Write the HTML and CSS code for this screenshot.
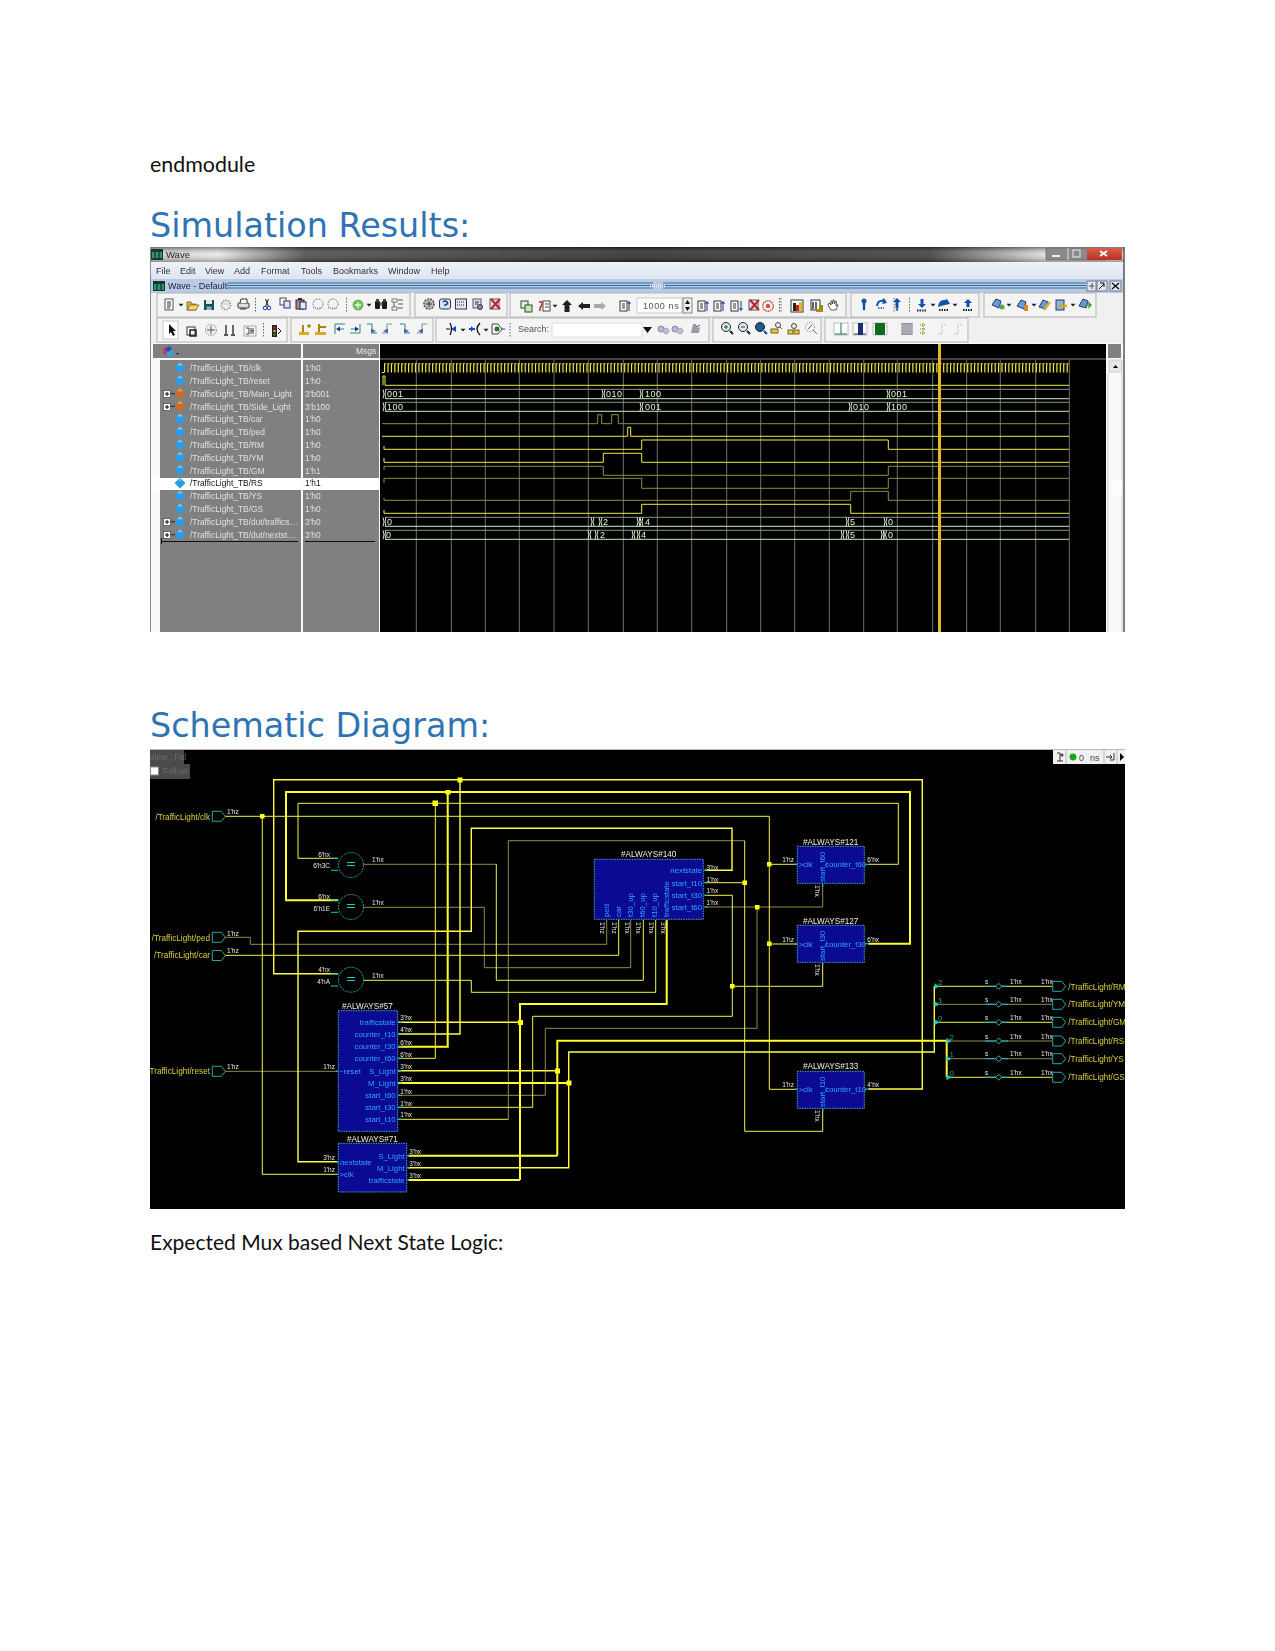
FILE: index.html
```html
<!DOCTYPE html>
<html lang="en">
<head>
<meta charset="utf-8">
<title>Simulation Results</title>
<link rel="stylesheet" href="styles.css">
</head>
<body>
<main class="page">
<p class="body-text first">endmodule</p>
<h2 class="heading">Simulation Results:</h2>

<svg class="shot wave" width="975" height="385" viewBox="150 247 975 385" xmlns="http://www.w3.org/2000/svg">
<defs>
<linearGradient id="titleH" x1="0" x2="1" y1="0" y2="0">
<stop offset="0" stop-color="#c8c8c8"/><stop offset=".07" stop-color="#e8e8e8"/><stop offset=".16" stop-color="#4a4a4a"/><stop offset=".5" stop-color="#2c2c2c"/><stop offset=".8" stop-color="#3c3c3c"/><stop offset=".92" stop-color="#e0e0e0"/><stop offset="1" stop-color="#d8d8d8"/>
</linearGradient>
<linearGradient id="titleV" x1="0" x2="0" y1="0" y2="1">
<stop offset="0" stop-color="#000" stop-opacity=".45"/><stop offset=".5" stop-color="#fff" stop-opacity=".1"/><stop offset="1" stop-color="#000" stop-opacity=".3"/>
</linearGradient>
<linearGradient id="menuV" x1="0" x2="0" y1="0" y2="1"><stop offset="0" stop-color="#eef1f8"/><stop offset="1" stop-color="#dfe5f1"/></linearGradient>
<linearGradient id="closeV" x1="0" x2="0" y1="0" y2="1"><stop offset="0" stop-color="#d8604c"/><stop offset="1" stop-color="#b83020"/></linearGradient>

<path id="tr" d="M-1 0q2 4.5 0 9M2 0q-2 4.5 0 9"/>
<g id="dia-b"><path d="M0-5.5 5.5 0 0 5.5-5.5 0Z" fill="#2a9ce8"/><path d="M0-5.5 3 -2.500H-3Z" fill="#6cc8f4"/></g>
<g id="dia-o"><path d="M0-5.5 5.5 0 0 5.5-5.5 0Z" fill="#d4682a"/><path d="M0-5.5 3-2.500H-3Z" fill="#ec9a58"/></g>
<g id="plus"><rect x="-3.5" y="-3.5" width="7" height="7" fill="#fff" stroke="#333" stroke-width=".6"/><path d="M-2 0H2M0-2V2" stroke="#000"/></g>

<path id="a" d="M-2.5-1.2H2.5L0 1.5Z" fill="#222"/>
<g id="i-doc"><rect x="-4" y="-6" width="8" height="11" fill="#fff" stroke="#555"/><path d="M-2-3H2M-2-1H2M-2 1H2M-2 3H1" stroke="#333" fill="none"/></g>
<g id="i-folder"><path d="M-6 5V-3H-2L-1-1H3V5Z" fill="#e0b040" stroke="#6a5010" stroke-width=".7"/><path d="M-6 5-3 0H6L3 5Z" fill="#f2d470" stroke="#6a5010" stroke-width=".7"/></g>
<g id="i-save"><rect x="-5" y="-5" width="10" height="10" fill="#12505a"/><rect x="-3" y="-5" width="6" height="4" fill="#dfe8e8"/><rect x="-2.500" y="1.500" width="5" height="3.500" fill="#9ab"/></g>
<g id="i-reload"><circle r="4.500" fill="none" stroke="#9aa88a" stroke-width="2" stroke-dasharray="1.500 1"/><path d="M-3-1H3" stroke="#b9c8a8"/></g>
<g id="i-print"><rect x="-5" y="-1" width="11" height="5" rx="1" fill="#ddd" stroke="#333"/><path d="M-3-1-2-5H4L4-1" fill="#fff" stroke="#333"/><path d="M-3 5H3" stroke="#333"/></g>
<g id="i-cut"><circle cx="-2" cy="4" r="1.800" fill="none" stroke="#2233aa"/><circle cx="2" cy="4" r="1.800" fill="none" stroke="#2233aa"/><path d="M-1.500 2.500 1.500-5M1.500 2.500-1.500-5" stroke="#222"/></g>
<g id="i-copy"><rect x="-5" y="-5" width="6" height="7" fill="#fff" stroke="#445"/><rect x="-1" y="-2" width="6" height="7" fill="#dfe6ff" stroke="#335"/></g>
<g id="i-paste"><rect x="-5" y="-4" width="8" height="9" fill="#a88" stroke="#422"/><rect x="-1" y="-2" width="6" height="7" fill="#e8ecff" stroke="#226"/><rect x="-3" y="-6" width="4" height="2" fill="#333"/></g>
<g id="i-dot"><circle r="5" fill="none" stroke="#556" stroke-dasharray="1.200 1.200"/><path d="M-5 4H5" stroke="#889" stroke-dasharray="1 1"/></g>
<g id="i-add"><circle r="5.500" fill="#74bb5a"/><path d="M-3 0H3M0-3V3" stroke="#e8ffe0" stroke-width="1.400"/></g>
<g id="i-bino"><rect x="-6" y="-3" width="5" height="8" rx="1" fill="#1a1a1a"/><rect x="1" y="-3" width="5" height="8" rx="1" fill="#1a1a1a"/><rect x="-5" y="-5" width="3" height="3" fill="#444"/><rect x="2" y="-5" width="3" height="3" fill="#444"/><rect x="-1.500" y="-1.500" width="3" height="3" fill="#666"/></g>
<g id="i-tree"><rect x="-5" y="-5" width="5" height="3" fill="#fff" stroke="#555" stroke-width=".8"/><rect x="-5" y="3" width="5" height="3" fill="#fff" stroke="#555" stroke-width=".8"/><path d="M1-4H6M1 0H6M1 4H6M-3-2V3" stroke="#555"/></g>
<g id="i-gear"><circle r="5" fill="#bbb" stroke="#556" stroke-dasharray="2 1" stroke-width="1.600"/><path d="M-3 0H3M0-3V3" stroke="#334"/></g>
<g id="i-help"><rect x="-5.500" y="-5" width="11" height="10" rx="2" fill="#d6e2f2" stroke="#334"/><path d="M-2-2Q0-4 2-2T0 1V2" fill="none" stroke="#1b3a8a" stroke-width="1.400"/></g>
<g id="i-cal"><rect x="-5.500" y="-5" width="11" height="10" fill="#e4e8ee" stroke="#334"/><path d="M-4-2H4M-4 1H4" stroke="#222" stroke-dasharray="1 1"/></g>
<g id="i-tool"><rect x="-5" y="-5" width="8" height="9" fill="#dde" stroke="#556"/><circle cx="2" cy="3" r="2.500" fill="#889" stroke="#334"/><path d="M-3-2H1M-3 0H0" stroke="#334"/></g>
<g id="i-redx"><rect x="-5" y="-5" width="9" height="10" fill="#dde" stroke="#556"/><path d="M-4-5 5 5M5-5-4 5" stroke="#c02020" stroke-width="2"/></g>
<g id="i-link"><rect x="-5" y="-5" width="7" height="7" fill="#e4f2e0" stroke="#205020"/><rect x="-1" y="-1" width="7" height="7" fill="#c8e4b8" stroke="#205020"/></g>
<g id="i-redlist"><rect x="-1" y="-5" width="7" height="10" fill="#fff" stroke="#444"/><path d="M1-2H5M1 1H5" stroke="#444"/><path d="M-5-4Q-1-5-2-2T-4 2V5" fill="none" stroke="#b02020" stroke-width="1.400"/></g>
<g id="i-up"><path d="M0-6 5-1H2.500V6H-2.500V-1H-5Z" fill="#222"/></g>
<g id="i-left"><path d="M-6 0-1-4V-2H6V2H-1V4Z" fill="#222"/></g>
<g id="i-right"><path d="M6 0 1-4V-2H-6V2H1V4Z" fill="#a8a8b0"/></g>
<g id="i-jump"><rect x="-5" y="-5" width="7" height="10" fill="#fff" stroke="#333"/><path d="M-3-2H0M-3 0H0M-3 2H0" stroke="#333"/><path d="M4 5V-4M2.500-2 4-4.500 5.500-2" stroke="#123a8a" fill="none"/></g>
<g id="i-down"><rect x="-6" y="-5" width="7" height="10" fill="#fff" stroke="#333"/><path d="M-4-2H-1M-4 0H-1M-4 2H-1" stroke="#333"/><path d="M4-5V4M2.500 2 4 4.500 5.500 2" stroke="#123a8a" fill="none"/></g>
<g id="i-tgt"><circle r="5.200" fill="none" stroke="#c04030" stroke-width="1.400" stroke-dasharray="1.500 .8"/><circle r="2.200" fill="#d05040"/></g>
<g id="i-bars"><rect x="-6" y="-6" width="12" height="12" fill="#fff" stroke="#333"/><rect x="-4" y="-3" width="3" height="8" fill="#222"/><rect x="-1" y="-1" width="3" height="6" fill="#cc2222"/><rect x="2" y="-4" width="3" height="9" fill="#d8c020"/></g>
<g id="i-bars2"><rect x="-6" y="-6" width="9" height="10" fill="#fff" stroke="#333"/><path d="M-4 3V-4M-1 3V-4" stroke="#222" stroke-width="1.400"/><rect x="2" y="-1" width="4" height="7" fill="#889020"/><rect x="-1" y="3" width="6" height="3" fill="#b81" /></g>
<g id="i-hand"><path d="M-4 2-5-1-3-2-2 0V-4L-1-4-.5-1 0-5 1-5 1.500-1 2.500-4 3.500-3.500 3 1 4-.5 5 0 3 5H-2Z" fill="#fff" stroke="#333" stroke-width=".8"/></g>
<g id="i-sd"><circle cy="-3" r="2.500" fill="#1150b0"/><path d="M0-1V4" stroke="#1150b0" stroke-width="2.500"/><circle cy="5" r="1.300" fill="#1150b0"/></g>
<g id="i-so"><path d="M-5 2Q-4-5 1-4L3-6 6-1 1 0 2-2Q-2-3-3 2Z" fill="#1150b0"/><path d="M-3 4H3" stroke="#1150b0" stroke-width="1.500" stroke-dasharray="1.500 1"/></g>
<g id="i-su"><path d="M0-6 4-2H1.500V4H-1.500V-2H-4Z" fill="#1150b0"/><circle cy="5.500" r="1.200" fill="#1150b0"/></g>
<g id="i-sd2"><path d="M-1.500-6H1.500V-1H4L0 3-4-1H-1.500Z" fill="#1150b0"/><path d="M-5 5.500H5" stroke="#223" stroke-width="2" stroke-dasharray="1.500 1"/></g>
<g id="i-so2"><path d="M-6 2Q-5-6 1-5L3-6 6-1 1 0-3 1Z" fill="#1150b0"/><path d="M-5 5H5" stroke="#223" stroke-width="2" stroke-dasharray="1.500 1"/></g>
<g id="i-su2"><path d="M0-6 4-2H1.500V2H-1.500V-2H-4Z" fill="#1150b0"/><path d="M-5 5H5" stroke="#223" stroke-width="2" stroke-dasharray="1.500 1"/></g>
<g id="i-blk1"><path d="M-6 1-2-5 3-3 1 4Z" fill="#5f9fd8" stroke="#336"/><circle cx="4" cy="3" r="2.500" fill="#56a850"/></g>
<g id="i-blk2"><path d="M-6 1-2-5 3-3 1 4Z" fill="#5f9fd8" stroke="#336"/><rect x="1" y="0" width="4" height="6" fill="#e08820"/></g>
<g id="i-blk3"><path d="M-6 2-2-5 3-3 1 4Z" fill="#5f9fd8" stroke="#336"/><path d="M-1 5 5-3" stroke="#e0b020" stroke-width="2.500"/></g>
<g id="i-blk4"><rect x="-5" y="-5" width="8" height="10" fill="#8fb4dc" stroke="#336"/><path d="M-2 1H6" stroke="#e0a820" stroke-width="2.500"/></g>
<g id="i-blk5"><path d="M-6 2-2-5 3-3 1 4Z" fill="#5f9fd8" stroke="#336"/><path d="M0 1H6M3-2 6 1 3 4" stroke="#4a9a40" fill="none" stroke-width="1.500"/></g>
<g id="i-ptr"><path d="M-3-6V4L-1 2 1 6 3 5 1 1H4Z" fill="#111"/></g>
<g id="i-zbox"><rect x="-5" y="-4" width="8" height="8" fill="#fff" stroke="#333"/><rect x="-2" y="-1" width="6" height="6" fill="none" stroke="#111" stroke-width="1.400"/></g>
<g id="i-move"><circle r="5.500" fill="#eee" stroke="#889" stroke-dasharray="1.500 1"/><path d="M-4 0H4M0-4V4" stroke="#556"/></g>
<g id="i-cur2"><path d="M-4-5V4M3-5V4M-6 5H-2M1 5H5" stroke="#222" stroke-width="1.300"/></g>
<g id="i-ruler"><rect x="-6" y="-5" width="12" height="10" fill="#f8f8f8" stroke="#889" stroke-width=".7"/><path d="M-4-3H-1V3H-4M1-3V3M3-3V3M1 0H4" stroke="#444" fill="none"/></g>
<g id="i-light"><rect x="-3" y="-6" width="5" height="12" fill="#222"/><circle cx="-.5" cy="-3.500" r="1.300" fill="#d02020"/><circle cx="-.5" cy="0" r="1.300" fill="#d8b020"/><circle cx="-.5" cy="3.500" r="1.300" fill="#209040"/><path d="M3-3 6 0 3 3" fill="none" stroke="#222"/></g>
<g id="i-c1"><path d="M-6 5H3M-2 5V-4" stroke="#a88410" stroke-width="2"/><rect x="-6" y="3" width="10" height="3" fill="#d8a820"/><path d="M4-5V-1M2-3H6" stroke="#a88410" stroke-width="1.300"/></g>
<g id="i-c2"><path d="M-2 5V-5M-2-2H5" stroke="#a88410" stroke-width="2"/><rect x="-6" y="3" width="11" height="3" fill="#d8a820"/></g>
<g id="i-e1"><path d="M-5 5V-5H5M-3 0H4" stroke="#1f8a78" fill="none"/><path d="M-4 0 0-2.500V2.500Z" fill="#2030b0"/></g>
<g id="i-e2"><path d="M5-5V4H-5M3 0H-4" stroke="#1f8a78" fill="none"/><path d="M4 0 0-2.500V2.500Z" fill="#2030b0"/></g>
<g id="i-e3"><path d="M-5-5H0V4H5" stroke="#1f8a78" fill="none"/><path d="M4 2-1-.5V4.500Z" fill="#5060c0"/></g>
<g id="i-e4"><path d="M5-5H0V4H-5" stroke="#7a9a88" fill="none"/><path d="M-4 2 1-.5V4.500Z" fill="#5060c0"/></g>
<g id="i-f1"><path d="M-5 0H-1M5 0H1" stroke="#111"/><path d="M-1-6Q2 0-1 6" fill="none" stroke="#111" stroke-width="1.300"/><path d="M0 0 5-3V3Z" fill="#2040d0"/></g>
<g id="i-f2"><path d="M-6 0H0" stroke="#2040d0" stroke-width="2"/><path d="M-1 0-4-3V3Z" fill="#2040d0"/><path d="M5-6Q-1 0 5 6" fill="none" stroke="#111" stroke-width="1.300"/></g>
<g id="i-f3"><path d="M-5-5H1L5 0 1 5H-5Z" fill="none" stroke="#444"/><circle r="2.500" fill="#1f7a30"/><path d="M5 0H8" stroke="#2040d0"/></g>
<g id="i-wave"><circle cx="-2" r="3" fill="#b8b8d8" stroke="#889"/><circle cx="3" cy="2" r="3" fill="#b8c0d8" stroke="#889" stroke-dasharray="1 1"/></g>
<g id="i-grey"><path d="M-4 4-2-5 1-5 2-1 5-2 4 4Z" fill="#9a9aa8"/><path d="M1-2 5-4" stroke="#555"/></g>
<g id="i-z"><circle cx="-1" cy="-1" r="4.500" fill="#d8e8f0" stroke="#222"/><path d="M3 3 6 6" stroke="#123" stroke-width="2"/><path d="M-3-1H1M-1-3V1" stroke="#206020"/></g>
<g id="i-zm"><circle cx="-1" cy="-1" r="4.500" fill="#d8e8f0" stroke="#222"/><path d="M3 3 6 6" stroke="#123" stroke-width="2"/><path d="M-3-1H1" stroke="#802020"/></g>
<g id="i-zf"><circle cx="-1" cy="-1" r="4.500" fill="#1a5a90" stroke="#123"/><path d="M3 3 6 6" stroke="#1a4a90" stroke-width="2.200"/></g>
<g id="i-zy"><rect x="-6" y="1" width="7" height="4" fill="#e8c840" stroke="#7a6010"/><circle cx="1" cy="-3" r="2.500" fill="#eee" stroke="#445"/><path d="M3-1 5 1" stroke="#445"/></g>
<g id="i-zd"><rect x="-6" y="1" width="5" height="4" fill="#e8c840" stroke="#7a6010"/><rect x="0" y="1" width="5" height="4" fill="#e8c840" stroke="#7a6010"/><circle cx="0" cy="-3" r="2.500" fill="#eee" stroke="#445"/></g>
<g id="i-zg"><circle cx="-1" cy="-1" r="4.500" fill="none" stroke="#889" stroke-dasharray="1.200 1"/><path d="M2 2 6 6" stroke="#667"/><path d="M-3 1 1-3" stroke="#a05050"/></g>
<g id="i-w1"><rect x="-7" y="-6" width="14" height="12" fill="#fff" stroke="#bbb"/><path d="M0-6V5M-6 5H6" stroke="#1a6a5a"/></g>
<g id="i-w2"><rect x="-7" y="-6" width="14" height="12" fill="#fff" stroke="#bbb"/><rect x="-2" y="-6" width="5" height="12" fill="#1a2f7a"/><path d="M-6 5H6" stroke="#1a2f7a"/></g>
<g id="i-w3"><rect x="-7" y="-6" width="14" height="12" fill="#fff" stroke="#bbb"/><rect x="-5" y="-6" width="10" height="12" fill="#106a20"/></g>
<g id="i-w4"><rect x="-5.500" y="-6" width="11" height="12" fill="#6a6a78"/><path d="M-5.500-4H5.500M-5.500-2H5.500M-5.500 0H5.500M-5.500 2H5.500M-5.500 4H5.500M-4-6V6M-2-6V6M0-6V6M2-6V6M4-6V6" stroke="#e8e8ee" stroke-width=".6"/></g>
<g id="i-w5"><path d="M0-6V6" stroke="#c8b020" stroke-width="1.800" stroke-dasharray="1.500 1"/><path d="M-3-4H3M-3 0H3M-3 4H3" stroke="#339060" stroke-dasharray="1 1"/></g>
<g id="i-w6"><path d="M-4 5H0V-4H4" stroke="#b8c0a8" fill="none" stroke-dasharray="1.500 1"/></g>
</defs>

<!-- window -->
<rect class="win" x="150" y="247" width="975" height="385"/>
<rect x="150" y="247" width="974" height="15" fill="url(#titleH)"/>
<rect x="150" y="247" width="974" height="15" fill="url(#titleV)"/>
<rect x="151" y="249" width="12" height="11" fill="#183830"/><rect x="152" y="252" width="10" height="6" fill="#2a9a70"/><path d="M155 252V258M159 252V258" stroke="#111"/>
<text class="t-title" x="166" y="258">Wave</text>
<rect x="1046" y="248" width="60" height="12" rx="1" fill="#8a8a8a" stroke="#555" stroke-width=".6"/>
<rect x="1087" y="248" width="35" height="12" rx="1" fill="url(#closeV)"/>
<path d="M1068 248V260" stroke="#ddd"/>
<rect x="1052" y="255" width="8" height="2" fill="#eee"/>
<rect x="1073" y="250" width="7" height="7" fill="none" stroke="#eee"/>
<path d="M1100 251 1107 256M1107 251 1100 256" stroke="#fff" stroke-width="1.800"/>

<rect x="150" y="262" width="974" height="17" fill="url(#menuV)"/>
<g class="t-menu">
<text x="156" y="274">File</text><text x="180" y="274">Edit</text><text x="205" y="274">View</text><text x="234" y="274">Add</text><text x="261" y="274">Format</text><text x="301" y="274">Tools</text><text x="333" y="274">Bookmarks</text><text x="388" y="274">Window</text><text x="431" y="274">Help</text>
</g>

<rect x="151" y="279" width="972" height="14" fill="#b9cbe4"/>
<rect x="153" y="281" width="12" height="10" fill="#163630"/><rect x="154" y="284" width="10" height="6" fill="#249a70"/><path d="M157 284V290M161 284V290" stroke="#111"/>
<text class="t-sub" x="168" y="289">Wave - Default</text>
<path d="M227 283H1086M227 285.500H1086M227 288H1086" stroke="#2f6f9f"/>
<rect x="653" y="282" width="10" height="8" fill="#b9cbe4"/><path d="M650 286H665" stroke="#d9e4f2" stroke-width="3" stroke-dasharray="1 1"/>
<rect x="1087" y="281" width="9" height="10" fill="#dfe6f0" stroke="#778"/><path d="M1089 286H1094M1092 283V289" stroke="#333" stroke-width=".8"/>
<rect x="1097" y="281" width="10" height="10" fill="#dfe6f0" stroke="#778"/><path d="M1099 289 1104 284M1100 283H1104V287" stroke="#111" fill="none"/>
<rect x="1110" y="281" width="11" height="10" fill="#dfe6f0" stroke="#778"/><path d="M1112 283 1119 289M1119 283 1112 289" stroke="#111" stroke-width="1.500"/>

<!-- toolbars -->
<rect x="151" y="293" width="972" height="50" fill="#f0f0f0"/>
<g class="tbgroup">
<rect x="157" y="293" width="253" height="24"/><rect x="415" y="293" width="92" height="24"/><rect x="510" y="293" width="336" height="24"/><rect x="851" y="293" width="128" height="24"/><rect x="984" y="293" width="112" height="24"/>
<rect x="157" y="318" width="130" height="24"/><rect x="291" y="318" width="142" height="24"/><rect x="436" y="318" width="273" height="24"/><rect x="713" y="318" width="108" height="24"/><rect x="825" y="318" width="143" height="24"/>
</g>
<g class="tbsep"><path d="M255.500 298V312M346.500 298V312M779.500 298V312M909.500 298V312M263.500 323V337M510 323V337M781 298V312M894 298V312"/></g>
<g>
<use href="#i-doc" x="169" y="305"/><use href="#a" x="181" y="305"/><use href="#i-folder" x="193" y="305"/><use href="#i-save" x="209" y="305"/><use href="#i-reload" x="226" y="305"/><use href="#i-print" x="243" y="304"/>
<use href="#i-cut" x="267" y="304"/><use href="#i-copy" x="285" y="303"/><use href="#i-paste" x="301" y="304"/><use href="#i-dot" x="318" y="304"/><use href="#i-dot" x="333" y="304"/>
<use href="#i-add" x="358" y="305"/><use href="#a" x="369" y="305"/><use href="#i-bino" x="381" y="304"/><use href="#i-tree" x="397" y="304"/>
<use href="#i-gear" x="429" y="304"/><use href="#i-help" x="445" y="304"/><use href="#i-cal" x="461" y="304"/><use href="#i-tool" x="478" y="304"/><use href="#i-redx" x="495" y="304"/>
<use href="#i-link" x="526" y="306"/><use href="#i-redlist" x="544" y="306"/><use href="#a" x="555" y="306"/><use href="#i-up" x="567" y="306"/><use href="#i-left" x="584" y="306"/><use href="#i-right" x="600" y="306"/><use href="#i-jump" x="625" y="306"/>
<rect x="637" y="298" width="45" height="15" fill="#fff" stroke="#c8c8c8"/><text class="t-mono" x="643" y="309">1000 ns</text>
<rect x="683" y="298" width="9" height="15" fill="#eee" stroke="#888"/><path d="M687.500 300 685 304H690ZM687.500 311 685 307H690Z" fill="#111"/>
<use href="#i-jump" x="703" y="306"/><use href="#i-jump" x="719" y="306"/><use href="#i-down" x="737" y="306"/><use href="#i-redx" x="754" y="305"/><use href="#i-tgt" x="768" y="306"/>
<use href="#i-bars" x="797" y="306"/><use href="#i-bars2" x="817" y="306"/><use href="#i-hand" x="833" y="305"/>
<use href="#i-sd" x="864" y="304"/><use href="#i-so" x="881" y="304"/><use href="#i-su" x="897" y="304"/><use href="#i-sd2" x="922" y="305"/><use href="#a" x="933" y="305"/><use href="#i-so2" x="944" y="305"/><use href="#a" x="955" y="305"/><use href="#i-su2" x="968" y="305"/>
<use href="#i-blk1" x="998" y="304"/><use href="#a" x="1009" y="305"/><use href="#i-blk2" x="1023" y="305"/><use href="#a" x="1034" y="305"/><use href="#i-blk3" x="1045" y="305"/><use href="#i-blk4" x="1061" y="305"/><use href="#a" x="1073" y="305"/><use href="#i-blk5" x="1085" y="304"/>

<rect x="163" y="321" width="15" height="18" fill="#fff" stroke="#c8c8c8"/>
<use href="#i-ptr" x="172" y="330"/><use href="#i-zbox" x="192" y="331"/><use href="#i-move" x="211" y="330"/><use href="#i-cur2" x="230" y="330"/><use href="#i-ruler" x="250" y="331"/>
<use href="#i-light" x="275" y="331"/>
<use href="#i-c1" x="305" y="329"/><use href="#i-c2" x="321" y="329"/><use href="#i-e1" x="340" y="329"/><use href="#i-e2" x="355" y="329"/><use href="#i-e3" x="372" y="329"/><use href="#i-e4" x="387" y="329"/><use href="#i-e3" x="405" y="329"/><use href="#i-e4" x="422" y="329"/>
<use href="#i-f1" x="451" y="329"/><use href="#a" x="463" y="330"/><use href="#i-f2" x="475" y="329"/><use href="#a" x="486" y="330"/><use href="#i-f3" x="497" y="329"/>
<text class="t-search" x="518" y="332">Search:</text>
<rect x="552" y="323" width="90" height="14" fill="#fff" stroke="#ddd"/>
<path d="M643 327H652L647.500 333Z" fill="#111"/>
<use href="#i-wave" x="663" y="329"/><use href="#i-wave" x="677" y="329"/><use href="#i-grey" x="695" y="329"/>
<use href="#i-z" x="727" y="328"/><use href="#i-zm" x="744" y="328"/><use href="#i-zf" x="761" y="328"/><use href="#i-zy" x="777" y="328"/><use href="#i-zd" x="794" y="329"/><use href="#i-zg" x="811" y="328"/>
<use href="#i-w1" x="841" y="329"/><use href="#i-w2" x="860" y="329"/><use href="#i-w3" x="880" y="329"/><use href="#i-w4" x="907" y="329"/><use href="#i-w5" x="923" y="329"/><use href="#i-w6" x="942" y="329"/><use href="#i-w6" x="958" y="329"/>
</g>

<!-- panes -->
<rect x="151" y="343" width="973" height="289" fill="#fafafa"/>
<path d="M150.500 247V632" stroke="#8a8a8a"/><path d="M1124 247V632" stroke="#333" stroke-width="1.200"/>
<rect x="153" y="344" width="148" height="14" fill="#808080"/>
<rect x="303" y="344" width="76" height="14" fill="#808080"/>
<rect x="160" y="360" width="141" height="272" fill="#808080"/>
<rect x="303" y="360" width="76" height="272" fill="#808080"/>
<rect x="380" y="344" width="726" height="288" fill="#000"/>
<rect x="1108" y="344" width="13" height="14" fill="#808080"/>
<rect x="1109" y="360" width="13" height="12" fill="#e8e8e8" stroke="#bbb" stroke-width=".7"/><path d="M1115.500 365 1113 368H1118Z" fill="#000"/>
<path d="M1108 373V632M1122 373V632" stroke="#c8c8c8"/>
<rect x="1113" y="480" width="9" height="15" fill="#fff"/>
<path d="M380 359H1106" stroke="#8a8a8a"/>
<circle cx="167" cy="351" r="4" fill="#d03070"/><circle cx="170" cy="353" r="3.500" fill="#2aa8d8"/><path d="M165 349 170 346 172 349 168 352Z" fill="#2050c0"/><path d="M176 353H179L177.500 355Z" fill="#222"/>
<text class="t-msg" x="356" y="354">Msgs</text>

<!-- rows -->
<rect x="153" y="478" width="148" height="12" fill="#fff"/><rect x="303" y="478" width="76" height="12" fill="#fff"/>
<g>
<use href="#dia-b" x="180" y="368"/><use href="#dia-b" x="180" y="380.700"/><use href="#dia-o" x="180" y="393.700"/><use href="#dia-o" x="180" y="406.300"/><use href="#dia-b" x="180" y="419"/><use href="#dia-b" x="180" y="432"/><use href="#dia-b" x="180" y="444.700"/><use href="#dia-b" x="180" y="457.300"/><use href="#dia-b" x="180" y="470.300"/><use href="#dia-b" x="180" y="483"/><use href="#dia-b" x="180" y="496"/><use href="#dia-b" x="180" y="509"/><use href="#dia-b" x="180" y="521.700"/><use href="#dia-b" x="180" y="534.700"/>
<path d="M170 393.700H175M170 406.300H175M170 521.700H175M170 534.700H175" stroke="#222"/>
<use href="#plus" x="167" y="394"/><use href="#plus" x="167" y="407"/><use href="#plus" x="167" y="522"/><use href="#plus" x="167" y="535"/>
</g>
<g class="t-name">
<text x="190" y="371">/TrafficLight_TB/clk</text>
<text x="190" y="384">/TrafficLight_TB/reset</text>
<text x="190" y="397">/TrafficLight_TB/Main_Light</text>
<text x="190" y="409.500">/TrafficLight_TB/Side_Light</text>
<text x="190" y="422">/TrafficLight_TB/car</text>
<text x="190" y="435">/TrafficLight_TB/ped</text>
<text x="190" y="448">/TrafficLight_TB/RM</text>
<text x="190" y="460.500">/TrafficLight_TB/YM</text>
<text x="190" y="473.500">/TrafficLight_TB/GM</text>
<text class="t-sel" x="190" y="486">/TrafficLight_TB/RS</text>
<text x="190" y="499">/TrafficLight_TB/YS</text>
<text x="190" y="512">/TrafficLight_TB/GS</text>
<text x="190" y="525">/TrafficLight_TB/dut/traffics…</text>
<text x="190" y="538">/TrafficLight_TB/dut/nextst…</text>
<text x="305" y="371">1'h0</text>
<text x="305" y="384">1'h0</text>
<text x="305" y="397">3'b001</text>
<text x="305" y="409.500">3'b100</text>
<text x="305" y="422">1'h0</text>
<text x="305" y="435">1'h0</text>
<text x="305" y="448">1'h0</text>
<text x="305" y="460.500">1'h0</text>
<text x="305" y="473.500">1'h1</text>
<text class="t-sel" x="305" y="486">1'h1</text>
<text x="305" y="499">1'h0</text>
<text x="305" y="512">1'h0</text>
<text x="305" y="525">3'h0</text>
<text x="305" y="538">3'h0</text>
</g>
<path d="M162 541.500H298M305 541.500H375" stroke="#111"/><path d="M161.500 538V544" stroke="#111"/>

<!-- waveforms -->
<path class="grid" d="M416.300 360V632M451.300 360V632M485.300 360V632M519.300 360V632M554 360V632M588.300 360V632M623.300 360V632M657.300 360V632M691.700 360V632M726.700 360V632M760.700 360V632M794.700 360V632M829.300 360V632M863.700 360V632M897.300 360V632M932.700 360V632M966.700 360V632M1000.300 360V632M1035.700 360V632M1069.300 360V632"/>
<path class="clk-v" d="M384 368H1069"/>
<path class="clk-t" d="M384 363.800H1069"/>
<path class="sig" d="M382 372.500H384"/>
<path class="sig" d="M383 385.300V376H385V385.300H1069"/>
<g class="bus-dim">
<path d="M385 389.300H1069M385 402.300H1069M385 517.300H1069M385 530.300H1069"/>
</g>
<g class="bus-bright">
<path d="M385 398.700H1069M385 411.300H1069M385 526.300H1069M385 539.300H1069"/>
</g>
<g class="bus-tr">
<use href="#tr" x="384" y="389.500"/><use href="#tr" x="603" y="389.500"/><use href="#tr" x="641" y="389.500"/><use href="#tr" x="888" y="389.500"/>
<use href="#tr" x="384" y="402.300"/><use href="#tr" x="641" y="402.300"/><use href="#tr" x="850" y="402.300"/><use href="#tr" x="888" y="402.300"/>
<use href="#tr" x="384" y="517.300"/><use href="#tr" x="592" y="517.300"/><use href="#tr" x="600" y="517.300"/><use href="#tr" x="638" y="517.300"/><use href="#tr" x="641" y="517.300"/><use href="#tr" x="847" y="517.300"/><use href="#tr" x="885" y="517.300"/>
<use href="#tr" x="384" y="530.300"/><use href="#tr" x="589" y="530.300"/><use href="#tr" x="596" y="530.300"/><use href="#tr" x="633" y="530.300"/><use href="#tr" x="638" y="530.300"/><use href="#tr" x="842" y="530.300"/><use href="#tr" x="847" y="530.300"/><use href="#tr" x="882" y="530.300"/><use href="#tr" x="884.500" y="530.300"/>
</g>
<g class="t-val">
<text x="387" y="397">001</text><text x="606" y="397">010</text><text x="645" y="397">100</text><text x="891" y="397">001</text>
<text x="387" y="410">100</text><text x="645" y="410">001</text><text x="853" y="410">010</text><text x="891" y="410">100</text>
<text x="387" y="525">0</text><text x="603" y="525">2</text><text x="645" y="525">4</text><text x="850" y="525">5</text><text x="888" y="525">0</text>
<text x="386" y="538">0</text><text x="600" y="538">2</text><text x="641" y="538">4</text><text x="850" y="538">5</text><text x="888" y="538">0</text>
</g>
<path class="dim" d="M382 423.700H597.700V414.700H601.700V423.700H611.700V414.700H618.300V423.700H1069"/>
<path class="sig" d="M382 436.300H627.700V427.300H630.700V436.300H1069"/>
<path class="sig" d="M384 446V449.300H641.700V440H888.300V449.300H1069"/>
<path class="sig" d="M384 458V462.300H603.300V453.300H641.700V458M641.700 458V462.300H1069"/>
<path class="dim" d="M384 470V466.300H603.300V475.300H888.300V466.300H1069"/>
<path class="dim" d="M384 483V478.300H641.700V488.300H888.300V478.300H1069"/>
<path class="dim" d="M384 498V500.300H850.700V491.300H888.300V500.300H1069"/>
<path class="sig" d="M384 510V513.300H641.700V504.300H850.700V513.300H1069"/>
<rect class="cursor" x="938" y="344" width="3" height="288"/>
</svg>

<h2 class="heading second">Schematic Diagram:</h2>

<svg class="shot schem" width="975" height="460" viewBox="150 749 975 460" xmlns="http://www.w3.org/2000/svg">
<defs>
<path id="port-in" d="M0-5H9L13 0 9 5H0Z"/>
<path id="inv" d="M-3 0 0-3 3 0 0 3Z"/>
<path id="eq" d="M-4-1.500H4M-4 1.500H4"/>
<path id="tri" d="M0-3 5 0 0 3Z"/>
</defs>
<rect class="sbg" x="150" y="749" width="975" height="460"/>
<path d="M150 749.500H1125" stroke="#b8b8b8"/>

<rect x="150" y="750" width="34" height="14" fill="#4a4a4a"/>
<rect x="150" y="764" width="40" height="15" fill="#4a4a4a"/>
<text class="t-ghost" x="149" y="760">View : Fal</text>
<rect x="150.500" y="767" width="8" height="8" fill="#fff" stroke="#888"/>
<text class="t-ghost" x="163" y="774">Follow</text>

<rect x="1053" y="750" width="72" height="14" fill="#f0f0f0"/>
<path d="M1066 750V764M1104 750V764M1117 750V764" stroke="#bbb"/>
<path d="M1057 753H1060V761M1057 761H1063" stroke="#333" fill="none"/><circle cx="1062" cy="755" r="1.500" fill="#444"/>
<circle cx="1073" cy="757" r="3.400" fill="#17a617"/>
<text class="t-nsbar" x="1079" y="761">0</text><text class="t-nsbar" x="1090" y="761">ns</text>
<path d="M1106 757H1112M1110 755 1112 757 1110 759M1114 753V760H1110" stroke="#333" fill="none"/>
<path d="M1120 753 1124 757 1120 761Z" fill="#000"/>

<!-- wires -->
<g class="w-dim">
<path d="M225 937.300H250.300V944.300H606.700V920"/>
<path d="M363.300 907.300H484.300V967.700H630.700V920"/>
<path d="M225 1071.300H338"/>
<path d="M705 907H822.700V883.300"/>
<path d="M757 907V1028.300H545.300V1095.300H398"/>
<path d="M508.300 1119.300V840.700H744.700"/>
<path d="M363.300 864.300H496.300"/>
</g>
<g class="w">
<path d="M225 816.300H769.300V1089.300H797.300"/>
<path d="M769.300 864.300H797.300M769.300 944H797.300"/>
<path d="M262.300 816.300V1174.300H338.300"/>
<path d="M435.300 803.300V1058.300H398.300"/>
<path d="M298 858.300V803.300H898.300V864.300H868.300"/>
<path d="M298 858.300H338"/>
<path d="M225 955.300H618.700V920"/>
<path d="M496.300 864.300V980.300H643.300V920"/>
<path d="M363.300 980.300H471.300V992.300H655.700V920"/>
<path d="M705 895.300H732.300V1016.300H532.700V1107.300H398"/>
<path d="M732.300 986.300H822.700V962.300"/>
<path d="M744.700 840.700V1131.300H822.700V1108.300"/>
<path d="M705 882.700H744.700"/>
<path d="M398 1119.300H508.300"/>
</g>
<g class="w-mid">
<path d="M338.300 973.700H273.700V779.700H922.300V1089H868.300"/>
<path d="M460 779.700V1034H398.300"/>
<path d="M705 870.300H732V828.300H471.300V931.300H298V1161.700H338"/>
<path d="M398 1022.300H520"/>
<path d="M408 1167.700H568.700V1052H934.300V986"/>
<path d="M398 1070.700H557.300"/>
</g>
<g class="w-thick">
<path d="M338.300 900.300H286V792H910V943.700H868.300"/>
<path d="M447.700 792V1046.700H398.300"/>
<path d="M520 1180H408.300M520 1180V1004H666.700V920"/>
<path d="M557.300 1155.700H408.300M557.300 1155.700V1040.700H946.700"/>
<path d="M398 1083H568.700"/>
<path d="M946.700 1041V1077.300"/>
</g>
<g class="junc">
<rect x="260" y="814" width="4.500" height="4.500"/><rect x="457.500" y="777.500" width="5" height="5"/><rect x="445.500" y="790" width="5" height="4.500"/><rect x="432.500" y="800.500" width="5.500" height="5.500"/>
<rect x="767" y="862" width="4.500" height="4.500"/><rect x="767" y="941.500" width="4.500" height="4.500"/><rect x="742.500" y="880.500" width="4.500" height="4.500"/><rect x="755" y="905" width="4.500" height="4.500"/><rect x="730" y="984" width="4.500" height="4.500"/>
<rect x="518" y="1020" width="5" height="5"/><rect x="555" y="1068.500" width="5" height="5"/><rect x="566.500" y="1080.500" width="5" height="5"/>
</g>

<!-- blocks -->
<g class="blk">
<rect x="594.300" y="859.300" width="109" height="60"/>
<rect x="797.300" y="846.300" width="67" height="37"/>
<rect x="797.300" y="925.300" width="67" height="37"/>
<rect x="797.300" y="1071.300" width="67" height="37"/>
<rect x="338.300" y="1010.700" width="59.400" height="120.600"/>
<rect x="338.300" y="1143.300" width="68.400" height="48.700"/>
</g>
<g class="stub">
<path d="M704 870.300H708M704 882.700H708M704 895.300H708M704 907H708M865 864.300H869M865 943.700H869M865 1089H869M794 864.300H797M794 944H797M794 1089.300H797M398 1022.300H402M398 1034H402M398 1046.700H402M398 1058.300H402M398 1070.700H402M398 1083H402M398 1095.300H402M398 1107.300H402M398 1119.300H402M407 1155.700H410M407 1167.700H410M407 1180H410M336 1161.700H338M336 1174.300H338M336 1071.300H338M822.700 884V887M822.700 963V966M822.700 1108.500V1112"/>
</g>

<g class="t-white">
<text x="621" y="857">#ALWAYS#140</text>
<text x="803" y="844.500">#ALWAYS#121</text>
<text x="803" y="924">#ALWAYS#127</text>
<text x="803" y="1069">#ALWAYS#133</text>
<text x="342" y="1008.500">#ALWAYS#57</text>
<text x="347" y="1142">#ALWAYS#71</text>
</g>

<g class="t-port">
<text class="end" x="702" y="873">nextstate</text><text class="end" x="702" y="885.500">start_t10</text><text class="end" x="702" y="898">start_t30</text><text class="end" x="702" y="910">start_t60</text>
<text transform="translate(608.500 917) rotate(-90)">ped</text><text transform="translate(620.500 917) rotate(-90)">car</text><text transform="translate(632.500 917) rotate(-90)">t30_up</text><text transform="translate(645 917) rotate(-90)">t60_up</text><text transform="translate(657 917) rotate(-90)">t10_up</text><text transform="translate(669 917) rotate(-90)">trafficstate</text>
<text x="798.500" y="867">&gt;clk</text><text x="825" y="867">counter_t60</text><text transform="translate(824.500 882) rotate(-90)">start_t60</text>
<text x="798.500" y="946.500">&gt;clk</text><text x="825" y="946.500">counter_t30</text><text transform="translate(824.500 961) rotate(-90)">start_t30</text>
<text x="798.500" y="1092">&gt;clk</text><text x="825" y="1092">counter_t10</text><text transform="translate(824.500 1107) rotate(-90)">start_t10</text>
<text class="end" x="395.700" y="1025">trafficstate</text><text class="end" x="395.700" y="1037">counter_t10</text><text class="end" x="395.700" y="1049">counter_t30</text><text class="end" x="395.700" y="1061">counter_t60</text><text class="end" x="395.700" y="1073.500">S_Light</text><text class="end" x="395.700" y="1086">M_Light</text><text class="end" x="395.700" y="1098">start_t60</text><text class="end" x="395.700" y="1110">start_t30</text><text class="end" x="395.700" y="1122">start_t10</text>
<text x="339" y="1073.500">~reset</text>
<text class="end" x="404.700" y="1158.500">S_Light</text><text class="end" x="404.700" y="1170.500">M_Light</text><text class="end" x="404.700" y="1183">trafficstate</text>
<text x="340" y="1164.500">nextstate</text><text x="339.500" y="1176.500">&gt;clk</text>
</g>

<g class="t-small">
<text x="227" y="813.500">1'hz</text><text x="227" y="935.500">1'hz</text><text x="227" y="953">1'hz</text><text x="227" y="1069">1'hz</text>
<text class="end" x="330" y="857">6'hx</text><text class="end" x="330" y="868">6'h3C</text><text x="372" y="862">1'hx</text>
<text class="end" x="330" y="899">6'hx</text><text class="end" x="330" y="910.500">6'h1E</text><text x="372" y="904.500">1'hx</text>
<text class="end" x="330" y="972">4'hx</text><text class="end" x="330" y="983.500">4'hA</text><text x="372" y="977.500">1'hx</text>
<text x="706.500" y="869.500">3'hx</text><text x="706.500" y="881.500">1'hx</text><text x="706.500" y="893">1'hx</text><text x="706.500" y="905">1'hx</text>
<text transform="translate(600 922) rotate(90)">1'hz</text><text transform="translate(612 922) rotate(90)">1'hz</text><text transform="translate(624.500 922) rotate(90)">1'hx</text><text transform="translate(636 922) rotate(90)">1'hx</text><text transform="translate(648.500 922) rotate(90)">1'hx</text><text transform="translate(660.500 922) rotate(90)">3'hx</text>
<text class="end" x="794" y="862">1'hz</text><text x="867.300" y="862">6'hx</text><text transform="translate(815 885) rotate(90)">1'hx</text>
<text class="end" x="794" y="941.500">1'hz</text><text x="867.300" y="941.500">6'hx</text><text transform="translate(815 964) rotate(90)">1'hx</text>
<text class="end" x="794" y="1086.500">1'hz</text><text x="867.300" y="1086.500">4'hx</text><text transform="translate(815 1110) rotate(90)">1'hx</text>
<text x="400.300" y="1020">3'hx</text><text x="400.300" y="1032">4'hx</text><text x="400.300" y="1044.500">6'hx</text><text x="400.300" y="1057">6'hx</text><text x="400.300" y="1069">3'hx</text><text x="400.300" y="1081">3'hx</text><text x="400.300" y="1093.500">1'hx</text><text x="400.300" y="1105.500">1'hx</text><text x="400.300" y="1117">1'hx</text>
<text class="end" x="335" y="1068.500">1'hz</text>
<text x="409.300" y="1154">3'hx</text><text x="409.300" y="1165.500">3'hx</text><text x="409.300" y="1178">3'hx</text>
<text class="end" x="335" y="1160">3'hz</text><text class="end" x="335" y="1171.500">1'hz</text>
</g>

<!-- comparators -->
<g class="cmp">
<circle cx="351" cy="865" r="12.500"/><circle cx="351" cy="907" r="12.500"/><circle cx="351" cy="979.700" r="12.500"/>
</g>
<g class="eqs">
<use href="#eq" x="351" y="864"/><use href="#eq" x="351" y="906"/><use href="#eq" x="351" y="979"/>
<path d="M331 858.300H338M331 870.300H338M331 900.300H338M331 912.300H338M331 973.700H338M331 986H338" />
</g>

<!-- input ports -->
<g class="pt">
<use href="#port-in" x="212.300" y="816.300"/><use href="#port-in" x="212.300" y="937.300"/><use href="#port-in" x="212.300" y="955.500"/><use href="#port-in" x="212.300" y="1071.300"/>
<use href="#port-in" x="1052.700" y="986.300"/><use href="#port-in" x="1052.700" y="1004.300"/><use href="#port-in" x="1052.700" y="1022.300"/><use href="#port-in" x="1052.700" y="1041"/><use href="#port-in" x="1052.700" y="1058.700"/><use href="#port-in" x="1052.700" y="1077.300"/>
</g>
<g class="t-yl">
<text class="end" x="210" y="819.500">/TrafficLight/clk</text>
<text class="end" x="210" y="940.500">/TrafficLight/ped</text>
<text class="end" x="210" y="958">/TrafficLight/car</text>
<text class="end" x="210" y="1074">/TrafficLight/reset</text>
<text x="1068.300" y="989.500">/TrafficLight/RM</text>
<text x="1068.300" y="1007">/TrafficLight/YM</text>
<text x="1068.300" y="1025">/TrafficLight/GM</text>
<text x="1068.300" y="1044">/TrafficLight/RS</text>
<text x="1068.300" y="1061.500">/TrafficLight/YS</text>
<text x="1068.300" y="1079.500">/TrafficLight/GS</text>
</g>

<!-- outputs -->
<g class="w"><path d="M937 986.300H1052M937 1022.300H1052M950 1077.300H1052"/></g>
<g class="w-dim"><path d="M937 1004.300H1052M950 1041H1052M950 1058.700H1052"/></g>
<g class="stubc"><path d="M1001.700 986.300H1008M1001.700 1004.300H1008M1001.700 1022.300H1008M1001.700 1041H1008M1001.700 1058.700H1008M1001.700 1077.300H1008M985 986.300H995.700M985 1004.300H995.700M985 1022.300H995.700M985 1041H995.700M985 1058.700H995.700M985 1077.300H995.700"/></g>
<g class="invs">
<use href="#inv" x="998.700" y="986.300"/><use href="#inv" x="998.700" y="1004.300"/><use href="#inv" x="998.700" y="1022.300"/><use href="#inv" x="998.700" y="1041"/><use href="#inv" x="998.700" y="1058.700"/><use href="#inv" x="998.700" y="1077.300"/>
</g>
<g class="tris">
<use href="#tri" x="934.500" y="986.300"/><use href="#tri" x="934.500" y="1004.300"/><use href="#tri" x="934.500" y="1022.300"/>
<use href="#tri" x="946.500" y="1041"/><use href="#tri" x="946.500" y="1058.700"/><use href="#tri" x="946.500" y="1077.300"/>
</g>
<g class="t-idx">
<text x="938" y="984.500">2</text><text x="938" y="1002.500">1</text><text x="938" y="1020.500">0</text>
<text x="949.500" y="1039.500">2</text><text x="949.500" y="1056.500">1</text><text x="949.500" y="1075.500">0</text>
</g>
<g class="t-small">
<text x="985" y="984">s</text><text x="1010" y="984">1'hx</text><text x="1041" y="984">1'hx</text>
<text x="985" y="1002">s</text><text x="1010" y="1002">1'hx</text><text x="1041" y="1002">1'hx</text>
<text x="985" y="1020">s</text><text x="1010" y="1020">1'hx</text><text x="1041" y="1020">1'hx</text>
<text x="985" y="1039">s</text><text x="1010" y="1039">1'hx</text><text x="1041" y="1039">1'hx</text>
<text x="985" y="1056">s</text><text x="1010" y="1056">1'hx</text><text x="1041" y="1056">1'hx</text>
<text x="985" y="1075">s</text><text x="1010" y="1075">1'hx</text><text x="1041" y="1075">1'hx</text>
</g>
</svg>

<p class="body-text last">Expected Mux based Next State Logic:</p>
</main>
</body>
</html>
```

FILE: styles.css
```css
html, body { margin: 0; padding: 0; background: #fff; }
.page { width: 975px; height: 1651px; padding-left: 150px; overflow: hidden; }

.body-text { font-family: "Lato", "Liberation Sans", sans-serif; font-size: 21px; line-height: 28px; color: #111; margin: 0; }
.first { padding-top: 150px; font-size: 21.4px; }
.last { margin-top: 18.5px; }

.heading { font-family: "DejaVu Sans", sans-serif; font-weight: 400; font-size: 33.4px; line-height: 42px; color: #2e74b5; margin: 0; }
.heading:not(.second) { margin-top: 27px; }
.second { margin-top: 73px; margin-bottom: 2px; }

.shot { display: block; filter: blur(.3px); }

.wave text, .schem text { font-family: "Liberation Sans", Arial, sans-serif; }
.win { fill: #f0f0f0; }
.t-title { font-size: 9.5px; fill: #222; }
.t-menu { font-size: 9px; fill: #333; }
.t-sub { font-size: 9px; fill: #224; }
.t-mono { font-size: 9px; fill: #555; letter-spacing: .6px; }
.t-search { font-size: 9px; fill: #555; }
.t-msg { font-size: 8.5px; fill: #e6e6e6; }
.t-name { font-size: 8.4px; fill: #e0e0e0; }
.t-sel { fill: #111; }
.t-val { font-size: 9px; fill: #e6f2d8; letter-spacing: .5px; }

.tbgroup rect { fill: #f4f4f4; stroke: #b4b4b4; stroke-width: 1; }
.tbsep path { stroke: #666; stroke-dasharray: 1.500 1.500; fill: none; }

.clk-v { fill: none; stroke: #ecec3c; stroke-width: 9; stroke-dasharray: 1.200 2.230; }
.clk-t { fill: none; stroke: #d8d840; stroke-width: 1; stroke-dasharray: 2.200 1.230; }
.grid { stroke: #6e6e6e; stroke-width: 1; fill: none; }
.sig { stroke: #ecec46; stroke-width: 1; fill: none; }
.dim { stroke: #8e8e44; stroke-width: 1; fill: none; }
.bus-dim path { stroke: #7f9a78; fill: none; }
.bus-bright path { stroke: #cfeac0; fill: none; }
.bus-tr { stroke: #d4e8c4; fill: none; }
.cursor { fill: #e8b820; }

.sbg { fill: #000; }
.t-ghost { font-size: 8.5px; fill: #6c6c6c; }
.t-nsbar { font-size: 9px; fill: #444; }

.w path { fill: none; stroke: #f4f44a; stroke-width: 1; }
.w-dim path { fill: none; stroke: #8f8f46; stroke-width: 1; }
.w-mid path { fill: none; stroke: #ffff40; stroke-width: 1.400; }
.w-thick path { fill: none; stroke: #ffff30; stroke-width: 2; }
.junc rect { fill: #ffff10; }

.blk rect { fill: #0a0a92; stroke: #5fc8ff; stroke-width: .8; stroke-dasharray: 1.500 1; }
.stub path { stroke: #20c8d0; fill: none; stroke-width: 1; }
.stubc path { stroke: #20b8c0; fill: none; }
.t-white { font-size: 8.200px; fill: #eee; }
.t-port { font-size: 7.800px; fill: #2fa4ff; }
.t-small { font-size: 6.500px; fill: #e8e8e8; }
.end { text-anchor: end; }
.cmp circle { fill: none; stroke: #1fb8b8; stroke-dasharray: 2 1; stroke-width: .9; }
.eqs { stroke: #20c8c8; fill: none; }
.pt { fill: none; stroke: #1fa8a8; stroke-width: 1; }
.t-yl { font-size: 8.200px; fill: #d8d040; }
.invs { fill: #000; stroke: #20b0b8; }
.tris { fill: #20c0c0; }
.t-idx { font-size: 8px; fill: #18a890; }
```
